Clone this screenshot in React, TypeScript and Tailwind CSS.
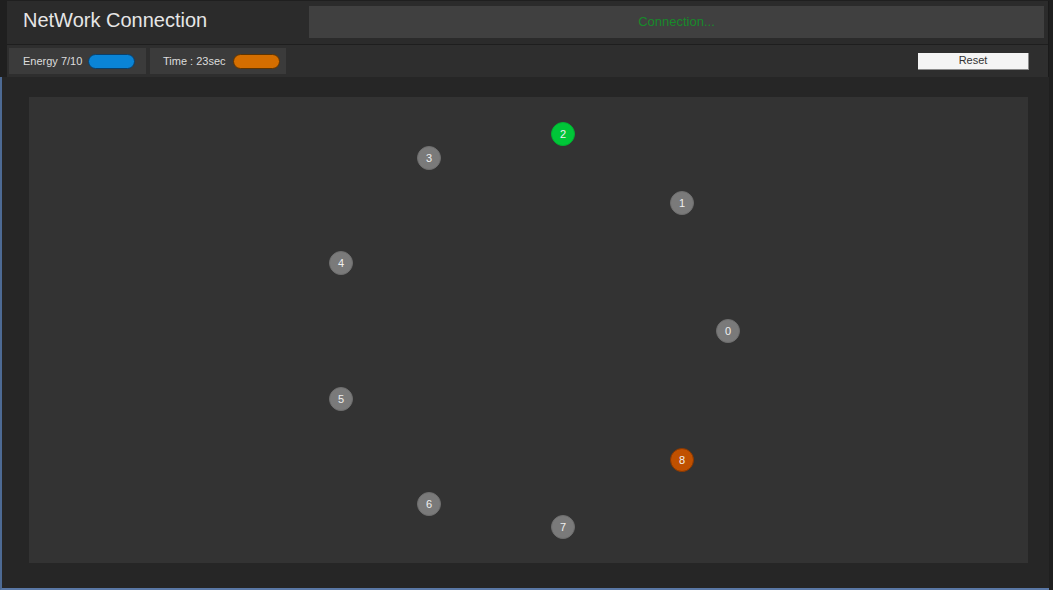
import React from 'react';

type NodeDot = { id: number; x: number; y: number; kind: 'idle' | 'start' | 'end' };

// centres relative to the canvas
const nodes: NodeDot[] = [
  { id: 2, x: 534, y: 37, kind: 'start' },
  { id: 3, x: 400, y: 61, kind: 'idle' },
  { id: 1, x: 653, y: 106, kind: 'idle' },
  { id: 4, x: 312, y: 166, kind: 'idle' },
  { id: 0, x: 699, y: 234, kind: 'idle' },
  { id: 5, x: 312, y: 302, kind: 'idle' },
  { id: 8, x: 653, y: 363, kind: 'end' },
  { id: 6, x: 400, y: 407, kind: 'idle' },
  { id: 7, x: 534, y: 430, kind: 'idle' },
];

function Node({ node }: { node: NodeDot }) {
  const colour =
    node.kind === 'start'
      ? 'bg-[#00c638] border-[#00b030]'
      : node.kind === 'end'
        ? 'bg-[#c05000] border-[#8a3800]'
        : 'bg-[#7a7a7a] border-[#6e6e6e]';
  return (
    <div
      className={`absolute w-6 h-6 -ml-3 -mt-3 rounded-full border flex items-center justify-center text-[11px] text-[#f0f0f0] ${colour}`}
      style={{ left: node.x, top: node.y }}
    >
      {node.id}
    </div>
  );
}

export default function App() {
  return (
    <div className="w-[1053px] h-[590px] bg-[#1f1f1f] flex flex-col overflow-hidden font-['Liberation_Sans',Arial,sans-serif]">
      <div className="flex flex-col ml-[7px] mr-[4px] mt-px border-r border-[#1a1a1a]">
        {/* header */}
        <div className="h-[44px] bg-[#2b2b2b] flex items-center border-b border-[#1e1e1e]">
          <div className="w-[302px] pl-4 text-[20px] text-[#e6e6e6] -mt-[5px]">NetWork Connection</div>
          <div className="flex-1 mr-[4px] h-8 -mt-[2px] bg-[#404040] flex items-center justify-center text-[13px] text-[#178a2a]">
            Connection...
          </div>
        </div>
        {/* toolbar */}
        <div className="h-[32px] bg-[#2e2e2e] flex items-center pl-[2px] gap-1">
          <div className="w-[137px] h-[26px] bg-[#3b3b3b] flex items-center pl-[14px] gap-[6px] text-[11px] text-[#dddddd]">
            <span>Energy 7/10</span>
            <span className="w-[47px] h-[15px] rounded-[8px] bg-[#0a84d6] border border-[#0a3f6a]" />
          </div>
          <div className="w-[136px] h-[26px] bg-[#3b3b3b] flex items-center pl-[13px] gap-[7px] text-[11px] text-[#dddddd]">
            <span>Time : 23sec</span>
            <span className="w-[47px] h-[15px] rounded-[8px] bg-[#d46e00] border border-[#5e3400]" />
          </div>
          <div className="flex-1" />
          <button className="w-[111px] h-[17px] mr-[19px] bg-[#f4f4f4] border-r border-b border-[#8a8a8a] text-[11px] leading-none text-[#333333]">
            Reset
          </button>
        </div>
      </div>
      {/* playing field */}
      <div className="flex-1 mr-[4px] bg-[#262626] border-l-2 border-b-2 border-l-[#4d6a94] border-b-[#5a78a6] pl-[27px] pt-[20px] pb-[23px] pr-[19px]">
        <div className="relative w-[999px] h-[466px] bg-[#333333]">
          {nodes.map((n) => (
            <Node key={n.id} node={n} />
          ))}
        </div>
      </div>
    </div>
  );
}
